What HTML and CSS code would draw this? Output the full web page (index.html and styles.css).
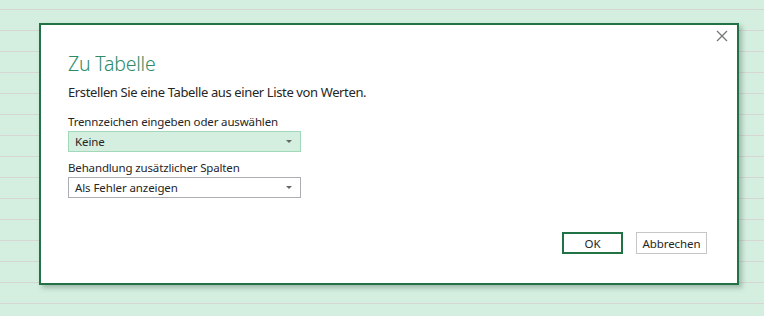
FILE: index.html
```html
<!DOCTYPE html>
<html>
<head>
<meta charset="utf-8">
<link rel="stylesheet" href="styles.css">
</head>
<body>
<div class="dialog">
  <div class="close">
    <svg width="12" height="12" viewBox="0 0 12 12"><path d="M1 1 L11 11 M11 1 L1 11" stroke="#777" stroke-width="1.3" fill="none"/></svg>
  </div>
  <h1 class="title">Zu Tabelle</h1>
  <p class="desc">Erstellen Sie eine Tabelle aus einer Liste von Werten.</p>
  <div class="field">
    <div class="label">Trennzeichen eingeben oder auswählen</div>
    <div class="select select-active"><span>Keine</span><span class="arrow"></span></div>
  </div>
  <div class="field">
    <div class="label">Behandlung zusätzlicher Spalten</div>
    <div class="select"><span>Als Fehler anzeigen</span><span class="arrow"></span></div>
  </div>
  <div class="buttons">
    <button class="btn btn-ok">OK</button>
    <button class="btn">Abbrechen</button>
  </div>
</div>
</body>
</html>
```
FILE: styles.css
```css
html, body {
  margin: 0;
  padding: 0;
}
body {
  width: 764px;
  height: 316px;
  overflow: hidden;
  background-color: #d4efe0;
  background-image: repeating-linear-gradient(to bottom, transparent 0, transparent 9px, #d6d6d4 9px, #d6d6d4 10px, transparent 10px, transparent 21px);
  padding: 23px 0 0 39px;
  box-sizing: border-box;
  font-family: "Noto Sans", "Open Sans", sans-serif;
}
.dialog {
  position: relative;
  width: 700px;
  height: 262px;
  box-sizing: border-box;
  border: 2px solid #217346;
  background: #fff;
  box-shadow: 3px 3px 5px rgba(60, 80, 70, 0.35);
  padding: 0 0 0 27px;
}
.close {
  position: absolute;
  right: 9px;
  top: 5px;
  width: 12px;
  height: 12px;
}
.close svg { display: block; }
.title {
  margin: 26px 0 0 0;
  font-weight: 300;
  font-size: 19.5px;
  line-height: 26px;
  letter-spacing: -0.2px;
  color: #2e8b68;
}
.desc {
  margin: 6px 0 0 0;
  font-size: 13px;
  line-height: 18px;
  letter-spacing: -0.38px;
  color: #262626;
}
.field {
  margin-top: 13px;
}
.field + .field { margin-top: 8px; }
.label {
  font-size: 11.5px;
  line-height: 16px;
  letter-spacing: -0.15px;
  color: #262626;
}
.select {
  margin-top: 1px;
  width: 233px;
  height: 21px;
  box-sizing: border-box;
  border: 1px solid #abadb3;
  background: #fff;
  display: flex;
  align-items: center;
  justify-content: space-between;
  padding: 0 8px 0 6px;
  font-size: 11.5px;
  letter-spacing: -0.1px;
  color: #262626;
}
.select-active {
  background: #d4efe0;
  border-color: #a0d8b9;
}
.arrow {
  width: 0;
  height: 0;
  border-left: 3px solid transparent;
  border-right: 3px solid transparent;
  border-top: 3px solid #666;
}
.buttons {
  position: absolute;
  right: 30px;
  bottom: 29px;
  display: flex;
  gap: 13px;
}
.btn {
  height: 22px;
  box-sizing: border-box;
  border: 1px solid #c6c6c6;
  background: #fff;
  font-family: "Noto Sans", "Open Sans", sans-serif;
  font-size: 11.5px;
  letter-spacing: -0.1px;
  color: #262626;
  padding: 0;
  width: 71px;
}
.btn-ok {
  width: 61px;
  border: 2px solid #217346;
}
```
